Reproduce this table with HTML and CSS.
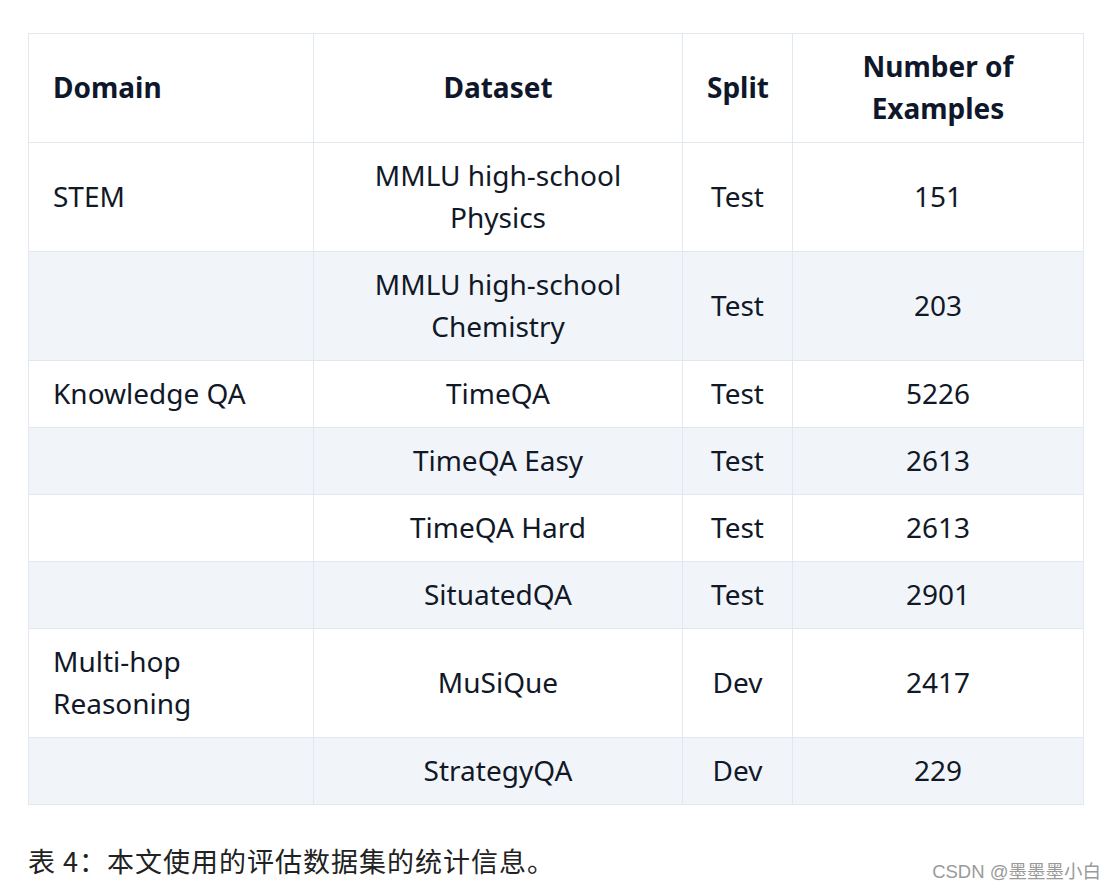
FILE: index.html
```html
<!DOCTYPE html>
<html lang="zh">
<head>
<meta charset="utf-8">
<title>Table 4</title>
<link rel="stylesheet" href="styles.css">
</head>
<body>
<div class="page">
  <table class="data">
    <colgroup>
      <col class="c1"><col class="c2"><col class="c3"><col class="c4">
    </colgroup>
    <thead>
      <tr><th class="left">Domain</th><th>Dataset</th><th>Split</th><th>Number of Examples</th></tr>
    </thead>
    <tbody>
      <tr><td class="left">STEM</td><td>MMLU high-school Physics</td><td>Test</td><td>151</td></tr>
      <tr><td class="left"></td><td>MMLU high-school Chemistry</td><td>Test</td><td>203</td></tr>
      <tr><td class="left">Knowledge QA</td><td>TimeQA</td><td>Test</td><td>5226</td></tr>
      <tr><td class="left"></td><td>TimeQA Easy</td><td>Test</td><td>2613</td></tr>
      <tr><td class="left"></td><td>TimeQA Hard</td><td>Test</td><td>2613</td></tr>
      <tr><td class="left"></td><td>SituatedQA</td><td>Test</td><td>2901</td></tr>
      <tr><td class="left">Multi-hop Reasoning</td><td>MuSiQue</td><td>Dev</td><td>2417</td></tr>
      <tr><td class="left"></td><td>StrategyQA</td><td>Dev</td><td>229</td></tr>
    </tbody>
  </table>
  <p class="caption">表 4：本文使用的评估数据集的统计信息。</p>
</div>
<div class="watermark">CSDN @墨墨墨小白</div>
</body>
</html>
```
FILE: styles.css
```css
html, body {
  margin: 0;
  padding: 0;
  background: #ffffff;
}
body {
  font-family: "Noto Sans", "Noto Sans CJK SC", sans-serif;
  color: #0f172a;
  width: 1114px;
  height: 890px;
  position: relative;
  overflow: hidden;
}
.page {
  padding: 33px 0 0 28px;
}
.data {
  border-collapse: collapse;
  table-layout: fixed;
  width: 1055px;
  font-size: 28px;
  line-height: 42px;
}
.c1 { width: 285px; }
.c2 { width: 369px; }
.c3 { width: 110px; }
.c4 { width: 291px; }
.data th,
.data td {
  border: 1px solid #e2e8f0;
  padding: 11px 24px 13px;
  text-align: center;
  vertical-align: middle;
}
.data th {
  font-weight: 700;
  color: #0f172a;
}
.data td {
  font-weight: 400;
  color: #111827;
}
.data .left {
  text-align: left;
}
.data tbody tr:nth-child(even) {
  background: #f1f5f9;
}
.caption {
  margin: 36px 0 0 0;
  font-family: "Noto Sans CJK SC", "Noto Sans", sans-serif;
  font-size: 27px;
  letter-spacing: 1px;
  line-height: 40px;
  color: #222222;
}
.watermark {
  position: absolute;
  right: 13px;
  bottom: 7px;
  font-family: "Liberation Sans", "Noto Sans CJK SC", sans-serif;
  font-size: 18.5px;
  color: #9a9a9a;
}
```
